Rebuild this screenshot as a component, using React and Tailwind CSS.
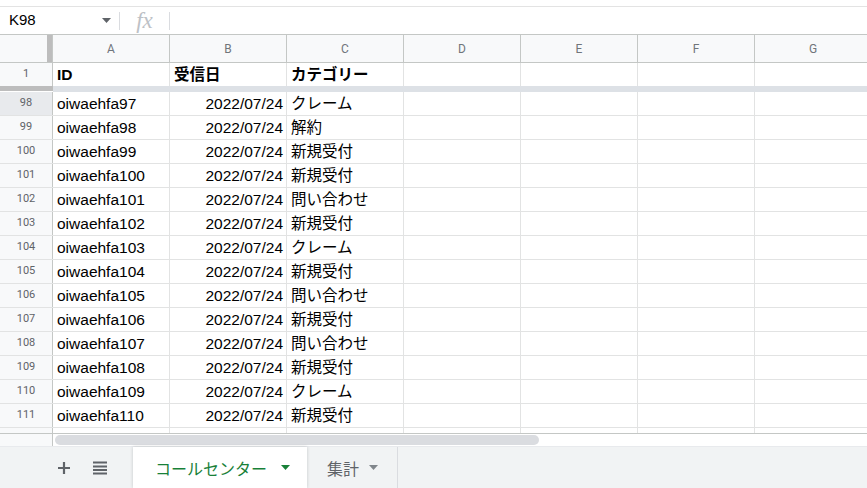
import React from "react";

const rows = [
  [98, "oiwaehfa97", "クレーム"],
  [99, "oiwaehfa98", "解約"],
  [100, "oiwaehfa99", "新規受付"],
  [101, "oiwaehfa100", "新規受付"],
  [102, "oiwaehfa101", "問い合わせ"],
  [103, "oiwaehfa102", "新規受付"],
  [104, "oiwaehfa103", "クレーム"],
  [105, "oiwaehfa104", "新規受付"],
  [106, "oiwaehfa105", "問い合わせ"],
  [107, "oiwaehfa106", "新規受付"],
  [108, "oiwaehfa107", "問い合わせ"],
  [109, "oiwaehfa108", "新規受付"],
  [110, "oiwaehfa109", "クレーム"],
  [111, "oiwaehfa110", "新規受付"],
];

const columns = ["A", "B", "C", "D", "E", "F", "G"];
const font = { fontFamily: '"Liberation Sans", Arial, "Noto Sans CJK JP", sans-serif' };

const Caret = ({ color }) => (
  <svg width="9" height="5" viewBox="0 0 9 5">
    <path d="M0 0h9L4.5 5z" fill={color} />
  </svg>
);

const EmptyCells = () => (
  <>
    {[0, 1, 2, 3].map((i) => (
      <div key={i} className="w-[117px] shrink-0 h-full border-r border-[#e2e3e3]" />
    ))}
  </>
);

const App = () => {
  return (
    <div
      className="w-[867px] h-[488px] overflow-hidden bg-white flex flex-col text-black"
      style={font}
    >
      {/* top strip */}
      <div className="h-[7px] shrink-0 border-b border-[#e3e3e3]" />

      {/* Formula bar */}
      <div className="h-[28px] shrink-0 border-b border-[#c4c7c5] flex items-center">
        <div className="w-[119px] flex items-center justify-between pl-[9px] pr-[8px] text-[15px]">
          <span>K98</span>
          <Caret color="#5f6368" />
        </div>
        <div className="w-px h-[18px] bg-[#dadce0]" />
        <div
          className="w-[49px] text-center text-[23px] italic text-[#bdc1c6] leading-none"
          style={{ fontFamily: '"Liberation Serif", serif' }}
        >
          fx
        </div>
        <div className="w-px h-[18px] bg-[#dadce0]" />
      </div>

      {/* Column header */}
      <div className="h-[28px] shrink-0 flex border-b border-[#c4c7c5] bg-[#f8f9fa]">
        <div className="w-[53px] shrink-0 h-full flex justify-end border-r border-[#c4c7c5]">
          <div className="w-[5px] h-full bg-[#bdbdbd]" />
        </div>
        {columns.map((c) => (
          <div
            key={c}
            className="w-[117px] shrink-0 h-full flex items-center justify-center border-r border-[#c4c7c5] text-[12px] text-[#70757a]"
            style={{ fontFamily: "Roboto, sans-serif" }}
          >
            {c}
          </div>
        ))}
      </div>

      {/* Row 1 (frozen) */}
      <div className="h-[23px] shrink-0 flex">
        <div
          className="w-[53px] shrink-0 h-full flex items-center justify-center bg-[#f8f9fa] border-r border-[#c4c7c5] text-[11px] text-[#5f6368]"
          style={{ fontFamily: "Roboto, sans-serif" }}
        >
          1
        </div>
        <div className="w-[117px] shrink-0 h-full border-r border-[#e2e3e3] flex items-center pl-[4px] pt-[1px] text-[15.5px] font-bold">
          ID
        </div>
        <div className="w-[117px] shrink-0 h-full border-r border-[#e2e3e3] flex items-center pl-[4px] pt-[1px] text-[15.5px] font-bold">
          受信日
        </div>
        <div className="w-[117px] shrink-0 h-full border-r border-[#e2e3e3] flex items-center pl-[4px] pt-[1px] text-[15.5px] font-bold">
          カテゴリー
        </div>
        <EmptyCells />
      </div>

      {/* Freeze bar */}
      <div className="h-[6px] shrink-0 flex">
        <div className="w-[53px] shrink-0 flex flex-col">
          <div className="h-[5px] bg-[#bdbdbd]" />
        </div>
        <div className="flex-1 bg-[#dde1e6]" />
      </div>

      {/* Data rows */}
      {rows.map(([n, id, cat]) => (
        <div key={n} className="h-[24px] shrink-0 flex border-b border-[#e2e3e3]">
          <div
            className={`w-[53px] shrink-0 h-full flex items-center justify-center border-r border-[#c4c7c5] text-[11px] text-[#5f6368] ${
              n === 98 ? "bg-[#e8eaed]" : "bg-[#f8f9fa]"
            }`}
            style={{ fontFamily: "Roboto, sans-serif" }}
          >
            {n}
          </div>
          <div className="w-[117px] shrink-0 h-full border-r border-[#e2e3e3] flex items-center pl-[4px] pt-[1px] text-[15.5px]">
            {id}
          </div>
          <div className="w-[117px] shrink-0 h-full border-r border-[#e2e3e3] flex items-center justify-end pr-[3px] pt-[1px] text-[15.5px]">
            2022/07/24
          </div>
          <div className="w-[117px] shrink-0 h-full border-r border-[#e2e3e3] flex items-center pl-[4px] pt-[1px] text-[15.5px]">
            {cat}
          </div>
          <EmptyCells />
        </div>
      ))}

      {/* Partial row */}
      <div className="h-[6px] shrink-0 flex border-b border-[#c4c7c5]">
        <div className="w-[53px] shrink-0 h-full bg-[#f8f9fa] border-r border-[#c4c7c5]" />
        {[0, 1, 2, 3, 4, 5, 6].map((i) => (
          <div key={i} className="w-[117px] shrink-0 h-full border-r border-[#e2e3e3]" />
        ))}
      </div>

      {/* Horizontal scrollbar */}
      <div className="h-[12px] shrink-0 flex">
        <div className="w-[53px] shrink-0 h-full bg-[#f8f9fa] border-r border-[#c4c7c5]" />
        <div className="flex-1 flex items-center pl-[2px]">
          <div className="w-[484px] h-[10px] rounded-full bg-[#dadce0]" />
        </div>
      </div>

      {/* Sheet tabs */}
      <div className="flex-1 flex bg-[#f1f3f4] border-t border-[#e8eaed]">
        <div className="w-[133px] shrink-0 flex items-center pl-[58px] gap-[23px]">
          <svg width="12" height="12" viewBox="0 0 12 12">
            <path d="M6 0v12M0 6h12" stroke="#5f6368" strokeWidth="2.2" />
          </svg>
          <svg width="14" height="14" viewBox="0 0 14 14">
            <path d="M0 1.5h14M0 5.5h14M0 9h14M0 12.5h14" stroke="#5f6368" strokeWidth="2" />
          </svg>
        </div>
        <div className="w-[174px] shrink-0 bg-white flex items-center pl-[22px] gap-[14px] shadow-[0_0_3px_rgba(60,64,67,0.25)]">
          <span className="text-[16px] text-[#188038]" style={{ fontFamily: '"Noto Sans CJK JP", sans-serif' }}>
            コールセンター
          </span>
          <Caret color="#188038" />
        </div>
        <div className="w-[91px] shrink-0 flex items-center pl-[20px] gap-[10px] border-r border-[#dadce0]">
          <span className="text-[16px] text-[#5f6368]" style={{ fontFamily: '"Noto Sans CJK JP", sans-serif' }}>
            集計
          </span>
          <Caret color="#80868b" />
        </div>
      </div>
    </div>
  );
};

export default App;
